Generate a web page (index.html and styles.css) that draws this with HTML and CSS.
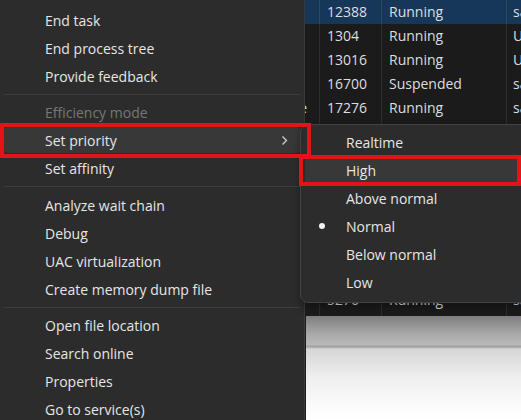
FILE: index.html
```html
<!DOCTYPE html>
<html>
<head>
<meta charset="utf-8">
<link rel="stylesheet" href="styles.css">
</head>
<body>
<div class="screen">
  <div class="table">
    <div class="row sel"><div class="c name"></div><div class="c pid">12388</div><div class="c status">Running</div><div class="c user">sa</div></div>
    <div class="row"><div class="c name"></div><div class="c pid">1304</div><div class="c status">Running</div><div class="c user">U</div></div>
    <div class="row"><div class="c name"></div><div class="c pid">13016</div><div class="c status">Running</div><div class="c user">U</div></div>
    <div class="row"><div class="c name"></div><div class="c pid">16700</div><div class="c status">Suspended</div><div class="c user">sa</div></div>
    <div class="row"><div class="c name">Microsoft Edge</div><div class="c pid">17276</div><div class="c status">Running</div><div class="c user">sa</div></div>
    <div class="row"><div class="c name"></div><div class="c pid"></div><div class="c status"></div><div class="c user"></div></div>
    <div class="row"><div class="c name"></div><div class="c pid"></div><div class="c status"></div><div class="c user"></div></div>
    <div class="row"><div class="c name"></div><div class="c pid"></div><div class="c status"></div><div class="c user"></div></div>
    <div class="row"><div class="c name"></div><div class="c pid"></div><div class="c status"></div><div class="c user"></div></div>
    <div class="row"><div class="c name"></div><div class="c pid"></div><div class="c status"></div><div class="c user"></div></div>
    <div class="row"><div class="c name"></div><div class="c pid"></div><div class="c status"></div><div class="c user"></div></div>
    <div class="row"><div class="c name"></div><div class="c pid"></div><div class="c status"></div><div class="c user"></div></div>
    <div class="row"><div class="c name"></div><div class="c pid">5276</div><div class="c status">Running</div><div class="c user">sa</div></div>
    <div class="row"><div class="c name"></div><div class="c pid"></div><div class="c status"></div><div class="c user"></div></div>
  </div>
  <div class="below"></div>

  <div class="menu main-menu">
    <div class="item">End task</div>
    <div class="item">End process tree</div>
    <div class="item">Provide feedback</div>
    <div class="sep sep-short"></div>
    <div class="item disabled">Efficiency mode</div>
    <div class="item active">Set priority
      <svg class="chev" width="7" height="11" viewBox="0 0 7 11"><polyline points="1.5,1.5 5.5,5.5 1.5,9.5" fill="none" stroke="#d0d0d0" stroke-width="1.3"/></svg>
    </div>
    <div class="item">Set affinity</div>
    <div class="sep"></div>
    <div class="item">Analyze wait chain</div>
    <div class="item">Debug</div>
    <div class="item">UAC virtualization</div>
    <div class="item">Create memory dump file</div>
    <div class="sep sep-short"></div>
    <div class="item">Open file location</div>
    <div class="item">Search online</div>
    <div class="item">Properties</div>
    <div class="item">Go to service(s)</div>
  </div>

  <div class="menu sub-menu">
    <div class="item">Realtime</div>
    <div class="item active">High</div>
    <div class="item">Above normal</div>
    <div class="item checked">Normal</div>
    <div class="item">Below normal</div>
    <div class="item">Low</div>
  </div>

  <div class="mark mark-priority"></div>
  <div class="mark mark-high"></div>
</div>
</body>
</html>
```
FILE: styles.css
```css
html, body {
  margin: 0;
  padding: 0;
  background: #1c1c1c;
}
.screen {
  position: relative;
  width: 521px;
  height: 420px;
  overflow: hidden;
  font-family: "Open Sans", "Noto Sans", sans-serif;
  font-size: 14px;
  color: #e6e6e6;
}
.table {
  height: 316px;
  overflow: hidden;
  background: #1b1b1b;
}
.row {
  display: grid;
  grid-template-columns: 320px 62px 125px 1fr;
  height: 24px;
  line-height: 24px;
}
.row.sel {
  background: #173759;
}
.c {
  white-space: nowrap;
  overflow: hidden;
  border-right: 1px solid #2e2e2e;
  color: #dedede;
}
.row.sel .c {
  border-right-color: #2a4868;
}
.c.name {
  text-align: right;
  padding-right: 12px;
}
.c.pid,
.c.status {
  padding-left: 7px;
}
.c.user {
  padding-left: 6px;
  border-right: none;
}
.below {
  margin-left: 306px;
  height: 104px;
  background: linear-gradient(#7e7e7e 0px, #a9a9a9 18px, #b9b9b9 29px, #9e9e9e 30px, #a6a6a6 31px, #d6d6d6 33px, #eeeeee 60px, #fbfbfb 90px, #ffffff 104px);
}
.menu {
  position: absolute;
  background: #2c2c2c;
  box-sizing: border-box;
}
.main-menu {
  left: 0;
  top: 0;
  width: 305px;
  height: 440px;
  padding-top: 6px;
  border-right: 1px solid #3a3a3a;
}
.item {
  position: relative;
  display: flex;
  align-items: center;
  height: 28px;
  padding-left: 45px;
  white-space: nowrap;
}
.item.disabled {
  color: #777777;
}
.item.active {
  background: #383838;
  border-radius: 4px;
  height: 26px;
  margin: 1px 4px;
  padding-left: 41px;
}
.chev {
  margin-left: auto;
  margin-right: 12px;
}
.sep {
  height: 1px;
  margin: 4px 4px;
  background: #3c3c3c;
}
.sep-short {
  margin-bottom: 3px;
}
.sub-menu {
  left: 300px;
  top: 124px;
  width: 232px;
  height: 179px;
  padding-top: 3px;
  border: 1px solid #424242;
  border-radius: 8px;
  box-shadow: 0 4px 10px rgba(0, 0, 0, 0.35);
}
.sub-menu .item {
  padding-left: 45px;
}
.sub-menu .item.active {
  padding-left: 41px;
  margin-right: 13px;
}
.item.checked::before {
  content: "";
  position: absolute;
  left: 18px;
  top: 11px;
  width: 6px;
  height: 6px;
  border-radius: 50%;
  background: #f2f2f2;
}
.mark {
  position: absolute;
  box-sizing: border-box;
  border: 4px solid #e3131c;
}
.mark-priority {
  left: 0;
  top: 123px;
  width: 311px;
  height: 35px;
}
.mark-high {
  left: 299px;
  top: 155px;
  width: 222px;
  height: 31px;
}
```
